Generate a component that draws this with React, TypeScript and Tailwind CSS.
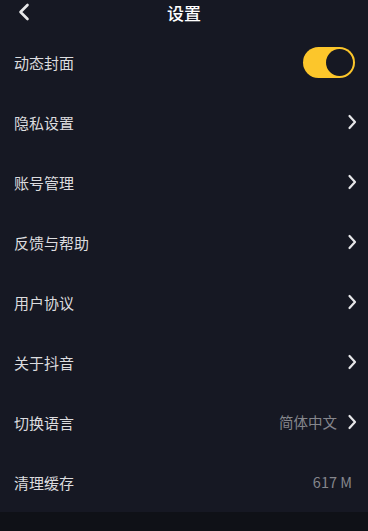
import React from "react";

const rows = [
	{name: "动态封面", toggle: true},
	{name: "隐私设置", arrow: true},
	{name: "账号管理", arrow: true},
	{name: "反馈与帮助", arrow: true},
	{name: "用户协议", arrow: true},
	{name: "关于抖音", arrow: true},
	{name: "切换语言", value: "简体中文", arrow: true},
	{name: "清理缓存", value: "617 M"},
];

function Chevron() {
	return (
		<svg width="10" height="16" viewBox="0 0 10 16" fill="none">
			<path d="M2.5 2 L8 8 L2.5 14" stroke="#e6e6e8" strokeWidth="2.2" strokeLinecap="round" strokeLinejoin="round" />
		</svg>
	);
}

function Toggle() {
	return (
		<div className="flex items-center justify-end w-[52px] h-[31px] mr-[2px] rounded-full bg-[#fcc62b] p-[2px]">
			<div className="w-[27px] h-[27px] rounded-full bg-[#161823]" />
		</div>
	);
}

export default function App() {
	return (
		<div
			className="flex flex-col w-[368px] h-[531px] bg-[#161823] text-[#dcdcdf]"
			style={{fontFamily: '"Noto Sans CJK SC", "Noto Sans", sans-serif'}}>
			<div className="relative flex justify-center h-[32px] pt-[4px]">
				<div className="absolute left-[16px] top-[2px]">
					<svg width="16" height="20" viewBox="0 0 16 20" fill="none">
						<path d="M11.5 3 L4.5 10 L11.5 17" stroke="#e8e8ea" strokeWidth="2.6" strokeLinecap="round" strokeLinejoin="round" />
					</svg>
				</div>
				<div className="text-[17px] font-medium text-white leading-[18px]">设置</div>
			</div>
			<div className="flex flex-col">
				{rows.map((row) => (
					<div key={row.name} className="flex items-center justify-between h-[60px] pl-[14px] pr-[11px]">
						<span className="text-[15px] leading-none">{row.name}</span>
						<div className="flex items-center gap-[10px]">
							{row.value && (
								<span className={`text-[14.5px] leading-none text-[#85868c] ${row.arrow ? "" : "mr-[5px]"}`}>
									{row.value}
								</span>
							)}
							{row.arrow && <Chevron />}
							{row.toggle && <Toggle />}
						</div>
					</div>
				))}
			</div>
			<div className="flex-1 bg-[#0f1117]" />
		</div>
	);
}
